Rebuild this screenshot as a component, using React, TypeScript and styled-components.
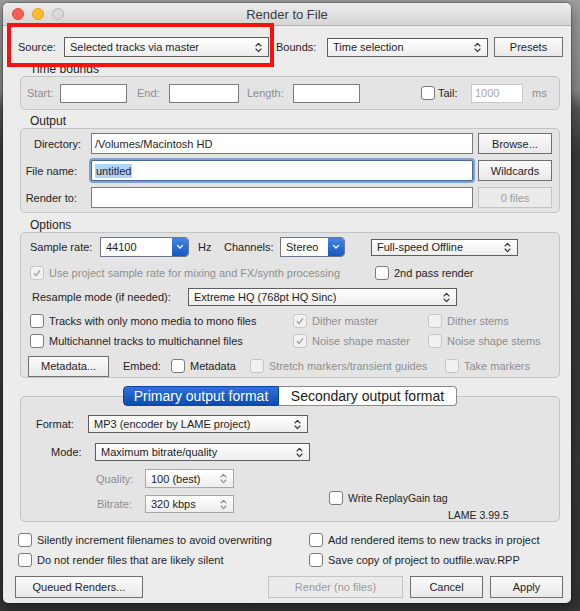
import React from 'react';
import styled, { createGlobalStyle } from 'styled-components';

const GlobalStyle = createGlobalStyle`
  html, body { margin: 0; padding: 0; }
  body {
    width: 580px;
    height: 611px;
    overflow: hidden;
    background: linear-gradient(to bottom, #a0a0a0 0px, #8c8c8c 90px, #5a5a5a 108px, #3d3d3d 150px, #343434 100%);
    font-family: 'Liberation Sans', Arial, Helvetica, sans-serif;
    font-size: 11px;
    color: #222;
  }
`;

const Desktop = styled.div`
  position: relative;
  width: 580px;
  height: 611px;
  padding: 3px 0 0 3px;
  box-sizing: border-box;
`;

const Window = styled.div`
  width: 568px;
  height: 600px;
  background: #ececec;
  border-radius: 5px;
  box-shadow: 0 0 0 1px rgba(0, 0, 0, 0.22), 0 4px 16px rgba(0, 0, 0, 0.45);
  overflow: hidden;
  display: flex;
  flex-direction: column;
`;

const TitleBar = styled.div`
  flex: none;
  height: 22px;
  display: flex;
  align-items: center;
  background: linear-gradient(#ececec, #d5d5d5);
  border-bottom: 1px solid #b3b3b3;
`;

const Lights = styled.div`
  width: 70px;
  padding-left: 9px;
  box-sizing: border-box;
  display: flex;
  gap: 8px;
`;

const Light = styled.span<{ $fill: string; $ring: string }>`
  width: 12px;
  height: 12px;
  border-radius: 50%;
  box-sizing: border-box;
  background: ${(p) => p.$fill};
  border: 1px solid ${(p) => p.$ring};
`;

const Title = styled.div`
  flex: 1;
  text-align: center;
  font-size: 13px;
  color: #3a3a3a;
`;

const TitleSpacer = styled.div`
  width: 70px;
`;

const Body = styled.div`
  flex: 1;
  display: flex;
  flex-direction: column;
`;

const Row = styled.div<{ $h: number; $pl?: number; $mt?: number; $pt?: number }>`
  flex: none;
  display: flex;
  align-items: center;
  box-sizing: border-box;
  height: ${(p) => p.$h}px;
  padding-left: ${(p) => p.$pl ?? 0}px;
  padding-top: ${(p) => p.$pt ?? 0}px;
  margin-top: ${(p) => p.$mt ?? 0}px;
`;

const Label = styled.span<{ $w?: number; $ml?: number; $muted?: boolean; $right?: number; $size?: number }>`
  flex: none;
  white-space: nowrap;
  ${(p) => (p.$w ? `width: ${p.$w}px;` : '')}
  margin-left: ${(p) => p.$ml ?? 0}px;
  color: ${(p) => (p.$muted ? '#8d8d8d' : '#232323')};
  ${(p) => (p.$right !== undefined ? `text-align: right; padding-right: ${p.$right}px; box-sizing: border-box;` : '')}
  ${(p) => (p.$size ? `font-size: ${p.$size}px;` : '')}
`;

const SelectBox = styled.div<{ $w: number; $h?: number; $dim?: boolean }>`
  flex: none;
  width: ${(p) => p.$w}px;
  height: ${(p) => p.$h ?? 18}px;
  box-sizing: border-box;
  border: 1px solid ${(p) => (p.$dim ? '#a8a8a8' : '#5e5e5e')};
  background: linear-gradient(#ffffff, #ededed);
  display: flex;
  align-items: center;
  justify-content: space-between;
  padding: 0 6px 0 5px;
  color: #1e1e1e;
  white-space: nowrap;
`;

const Button = styled.div<{ $w: number; $h?: number; $ml?: number; $disabled?: boolean }>`
  flex: none;
  width: ${(p) => p.$w}px;
  height: ${(p) => p.$h ?? 21}px;
  margin-left: ${(p) => p.$ml ?? 0}px;
  box-sizing: border-box;
  display: flex;
  align-items: center;
  justify-content: center;
  border: 1px solid ${(p) => (p.$disabled ? '#c3c3c3' : '#6f6f6f')};
  background: ${(p) => (p.$disabled ? '#ebebeb' : 'linear-gradient(#fbfbfb, #e9e9e9)')};
  color: ${(p) => (p.$disabled ? '#9b9b9b' : '#1e1e1e')};
`;

const GroupLabel = styled.div<{ $mt: number }>`
  flex: none;
  height: 14px;
  line-height: 14px;
  margin-top: ${(p) => p.$mt}px;
  padding-left: 27px;
  font-size: 12px;
  color: #1e1e1e;
`;

const GroupBox = styled.div<{ $h: number; $pt?: number }>`
  flex: none;
  width: 540px;
  height: ${(p) => p.$h}px;
  margin-left: 17px;
  box-sizing: border-box;
  padding-top: ${(p) => p.$pt ?? 0}px;
  border: 1px solid #c4c4c4;
  border-radius: 5px;
  background: #e4e4e4;
  display: flex;
  flex-direction: column;
`;

const Stack = styled.div<{ $gap: number; $pt?: number }>`
  display: flex;
  flex-direction: column;
  gap: ${(p) => p.$gap}px;
  padding-top: ${(p) => p.$pt ?? 0}px;
`;

const TextInput = styled.div<{ $w: number; $h?: number; $disabled?: boolean; $focus?: boolean }>`
  flex: none;
  width: ${(p) => p.$w}px;
  height: ${(p) => p.$h ?? 19}px;
  box-sizing: border-box;
  display: flex;
  align-items: center;
  padding-left: 3px;
  background: #fff;
  border: 1px solid ${(p) => (p.$focus ? '#46699a' : p.$disabled ? '#c9c9c9' : '#7c7c7c')};
  ${(p) => (p.$focus ? 'box-shadow: 0 0 0 2px #7fa2cf; border-radius: 2px;' : '')}
  color: ${(p) => (p.$disabled ? '#a9a9a9' : '#1e1e1e')};
  white-space: nowrap;
`;

const Selection = styled.span`
  background: #b2d3fd;
  padding: 1px 1px;
`;

const Box = styled.span<{ $disabled?: boolean; $ml?: number }>`
  flex: none;
  width: 14px;
  height: 14px;
  margin-left: ${(p) => p.$ml ?? 0}px;
  box-sizing: border-box;
  border-radius: 3px;
  border: 1px solid ${(p) => (p.$disabled ? '#c6c6c6' : '#7b7b7b')};
  background: ${(p) => (p.$disabled ? '#f1f1f1' : '#ffffff')};
  display: flex;
  align-items: center;
  justify-content: center;
`;

const CheckWrap = styled.div<{ $w?: number }>`
  flex: none;
  display: flex;
  align-items: center;
  gap: 5px;
  ${(p) => (p.$w ? `width: ${p.$w}px;` : '')}
  white-space: nowrap;
`;

const CheckText = styled.span<{ $disabled?: boolean; $size?: number }>`
  color: ${(p) => (p.$disabled ? '#8f8f8f' : '#1e1e1e')};
  ${(p) => (p.$size ? `font-size: ${p.$size}px;` : '')}
`;

const ComboBox = styled.div<{ $w: number }>`
  flex: none;
  width: ${(p) => p.$w}px;
  height: 20px;
  box-sizing: border-box;
  display: flex;
  border: 1px solid #6a7587;
  border-radius: 0 4px 4px 0;
  overflow: hidden;
  background: #fff;
`;

const ComboField = styled.span`
  flex: 1;
  display: flex;
  align-items: center;
  padding-left: 5px;
  color: #1e1e1e;
`;

const ComboCap = styled.span`
  width: 16px;
  display: flex;
  align-items: center;
  justify-content: center;
  background: linear-gradient(#4387e6, #1656c2);
`;

const TabsRow = styled.div`
  flex: none;
  position: relative;
  z-index: 1;
  height: 20px;
  margin: 8px 0 -10px 17px;
  width: 540px;
  display: flex;
  justify-content: center;
`;

const Tab = styled.div<{ $active?: boolean; $w: number }>`
  width: ${(p) => p.$w}px;
  box-sizing: border-box;
  display: flex;
  align-items: center;
  justify-content: center;
  font-size: 14px;
  ${(p) =>
    p.$active
      ? `
    color: #fff;
    background: linear-gradient(#2f72d8, #0b4cb2);
    border: 1px solid #0b46a4;
    border-radius: 4px 0 0 4px;
  `
      : `
    color: #1a1a1a;
    background: #fff;
    border: 1px solid #8a8a8a;
    border-left: none;
    border-radius: 0 4px 4px 0;
  `}
`;

const Columns = styled.div`
  display: flex;
  margin-top: 6px;
`;

const SideColumn = styled.div`
  display: flex;
  flex-direction: column;
  justify-content: flex-end;
  margin-left: 95px;
`;

const ButtonBar = styled.div`
  flex: none;
  display: flex;
  align-items: center;
  height: 22px;
  margin-top: 9px;
  padding-left: 12px;
`;

const Highlight = styled.div`
  position: absolute;
  left: 7px;
  top: 23px;
  width: 267px;
  height: 44px;
  box-sizing: border-box;
  border: 4px solid #f4110f;
  pointer-events: none;
`;

const Stepper: React.FC<{ dim?: boolean }> = ({ dim }) => (
  <svg width="7" height="11" viewBox="0 0 7 11">
    <path
      d="M1 4 L3.5 1.4 L6 4 M1 7 L3.5 9.6 L6 7"
      stroke={dim ? '#8c8c8c' : '#333'}
      strokeWidth="1.1"
      fill="none"
      strokeLinecap="round"
      strokeLinejoin="round"
    />
  </svg>
);

const Select: React.FC<{ w: number; h?: number; dim?: boolean; children: React.ReactNode }> = ({ w, h, dim, children }) => (
  <SelectBox $w={w} $h={h} $dim={dim}>
    <span>{children}</span>
    <Stepper dim={dim} />
  </SelectBox>
);

const Combo: React.FC<{ w: number; value: string }> = ({ w, value }) => (
  <ComboBox $w={w}>
    <ComboField>{value}</ComboField>
    <ComboCap>
      <svg width="8" height="6" viewBox="0 0 8 6">
        <path d="M1.5 1.5 L4 4 L6.5 1.5" stroke="#fff" strokeWidth="1.3" fill="none" strokeLinecap="round" />
      </svg>
    </ComboCap>
  </ComboBox>
);

const Check: React.FC<{ checked?: boolean; disabled?: boolean; ml?: number }> = ({ checked, disabled, ml }) => (
  <Box $disabled={disabled} $ml={ml}>
    {checked && (
      <svg width="10" height="10" viewBox="0 0 10 10">
        <path d="M2 5.3 L4.1 7.6 L8 2.3" stroke={disabled ? '#9d9d9d' : '#222'} strokeWidth="1.3" fill="none" />
      </svg>
    )}
  </Box>
);

const CheckItem: React.FC<{ w?: number; checked?: boolean; disabled?: boolean; size?: number; children: React.ReactNode }> = ({
  w,
  checked,
  disabled,
  size,
  children,
}) => (
  <CheckWrap $w={w}>
    <Check checked={checked} disabled={disabled} />
    <CheckText $disabled={disabled} $size={size}>
      {children}
    </CheckText>
  </CheckWrap>
);

const App: React.FC = () => {
  return (
    <Desktop>
      <GlobalStyle />
      <Window>
        <TitleBar>
          <Lights>
            <Light $fill="#fc5f57" $ring="#df4640" />
            <Light $fill="#fdbc2e" $ring="#dea025" />
            <Light $fill="#dadada" $ring="#b9b9b9" />
          </Lights>
          <Title>Render to File</Title>
          <TitleSpacer />
        </TitleBar>

        <Body>
          <Row $h={20} $mt={11} $pl={15}>
            <Label $w={46}>Source:</Label>
            <Select w={205} h={20}>Selected tracks via master</Select>
            <Label $ml={7} $w={51}>Bounds:</Label>
            <Select w={161} h={19}>Time selection</Select>
            <Button $w={69} $h={20} $ml={6}>Presets</Button>
          </Row>

          <GroupLabel $mt={5}>Time bounds</GroupLabel>
          <GroupBox $h={34}>
            <Row $h={32} $pl={6}>
              <Label $w={33} $muted>Start:</Label>
              <TextInput $w={67} />
              <Label $ml={10} $w={32} $muted>End:</Label>
              <TextInput $w={70} />
              <Label $ml={8} $w={46} $muted>Length:</Label>
              <TextInput $w={67} />
              <Check ml={61} />
              <Label $ml={3} $w={33}>Tail:</Label>
              <TextInput $w={52} $disabled>1000</TextInput>
              <Label $ml={9} $muted>ms</Label>
            </Row>
          </GroupBox>

          <GroupLabel $mt={4}>Output</GroupLabel>
          <GroupBox $h={85}>
            <Stack $gap={6} $pt={4}>
              <Row $h={21}>
                <Label $w={70} $right={10}>Directory:</Label>
                <TextInput $w={382} $h={21}>/Volumes/Macintosh HD</TextInput>
                <Button $w={74} $ml={5}>Browse...</Button>
              </Row>
              <Row $h={21}>
                <Label $w={70} $right={14}>File name:</Label>
                <TextInput $w={382} $h={21} $focus>
                  <Selection>untitled</Selection>
                </TextInput>
                <Button $w={74} $ml={5}>Wildcards</Button>
              </Row>
              <Row $h={21}>
                <Label $w={70} $right={14}>Render to:</Label>
                <TextInput $w={382} $h={21} />
                <Button $w={74} $ml={5} $disabled>0 files</Button>
              </Row>
            </Stack>
          </GroupBox>

          <GroupLabel $mt={5}>Options</GroupLabel>
          <GroupBox $h={146}>
            <Row $h={28} $pl={9}>
              <Label $w={70}>Sample rate:</Label>
              <Combo w={89} value="44100" />
              <Label $ml={9} $w={26}>Hz</Label>
              <Label $w={56}>Channels:</Label>
              <Combo w={65} value="Stereo" />
              <SelectBox $w={147} $h={17} style={{ marginLeft: 26 }}>
                <span>Full-speed Offline</span>
                <Stepper />
              </SelectBox>
            </Row>
            <Row $h={24} $pl={9}>
              <CheckItem w={345} checked disabled>
                Use project sample rate for mixing and FX/synth processing
              </CheckItem>
              <CheckItem>2nd pass render</CheckItem>
            </Row>
            <Row $h={24} $pl={11}>
              <Label $w={156}>Resample mode (if needed):</Label>
              <Select w={269}>Extreme HQ (768pt HQ Sinc)</Select>
            </Row>
            <Row $h={24} $pl={9}>
              <CheckItem w={263}>Tracks with only mono media to mono files</CheckItem>
              <CheckItem w={135} checked disabled>Dither master</CheckItem>
              <CheckItem disabled>Dither stems</CheckItem>
            </Row>
            <Row $h={16} $pl={9}>
              <CheckItem w={263}>Multichannel tracks to multichannel files</CheckItem>
              <CheckItem w={135} checked disabled>Noise shape master</CheckItem>
              <CheckItem disabled>Noise shape stems</CheckItem>
            </Row>
            <Row $h={28} $pt={6} $pl={7}>
              <Button $w={81}>Metadata...</Button>
              <Label $ml={14} $w={48}>Embed:</Label>
              <CheckItem w={79}>Metadata</CheckItem>
              <CheckItem w={195} disabled>Stretch markers/transient guides</CheckItem>
              <CheckItem disabled>Take markers</CheckItem>
            </Row>
          </GroupBox>

          <TabsRow>
            <Tab $active $w={156}>Primary output format</Tab>
            <Tab $w={178}>Secondary output format</Tab>
          </TabsRow>
          <GroupBox $h={126} $pt={16}>
            <Row $h={22} $pl={15}>
              <Label $w={52}>Format:</Label>
              <Select w={220}>MP3 (encoder by LAME project)</Select>
            </Row>
            <Row $h={22} $mt={6} $pl={30}>
              <Label $w={44}>Mode:</Label>
              <Select w={215}>Maximum bitrate/quality</Select>
            </Row>
            <Columns>
              <Stack $gap={7} style={{ marginBottom: 8 }}>
                <Row $h={19} $pl={75}>
                  <Label $w={49} $muted>Quality:</Label>
                  <Select w={89} h={19} dim>100 (best)</Select>
                </Row>
                <Row $h={18} $pl={76}>
                  <Label $w={48} $muted>Bitrate:</Label>
                  <Select w={89} dim>320 kbps</Select>
                </Row>
              </Stack>
              <SideColumn>
                <Row $h={14}>
                  <CheckItem size={10.5}>Write ReplayGain tag</CheckItem>
                </Row>
                <Row $h={12} $mt={4} $pl={119}>
                  <Label $size={10.5}>LAME 3.99.5</Label>
                </Row>
              </SideColumn>
            </Columns>
          </GroupBox>

          <Row $h={14} $mt={11} $pl={15}>
            <CheckItem w={291}>Silently increment filenames to avoid overwriting</CheckItem>
            <CheckItem>Add rendered items to new tracks in project</CheckItem>
          </Row>
          <Row $h={14} $mt={6} $pl={15}>
            <CheckItem w={291}>Do not render files that are likely silent</CheckItem>
            <CheckItem>Save copy of project to outfile.wav.RPP</CheckItem>
          </Row>

          <ButtonBar>
            <Button $w={128} $h={22}>Queued Renders...</Button>
            <Button $w={135} $h={22} $ml={125} $disabled>Render (no files)</Button>
            <Button $w={73} $h={22} $ml={7}>Cancel</Button>
            <Button $w={73} $h={22} $ml={7}>Apply</Button>
          </ButtonBar>
        </Body>
      </Window>
      <Highlight />
    </Desktop>
  );
};

export default App;
